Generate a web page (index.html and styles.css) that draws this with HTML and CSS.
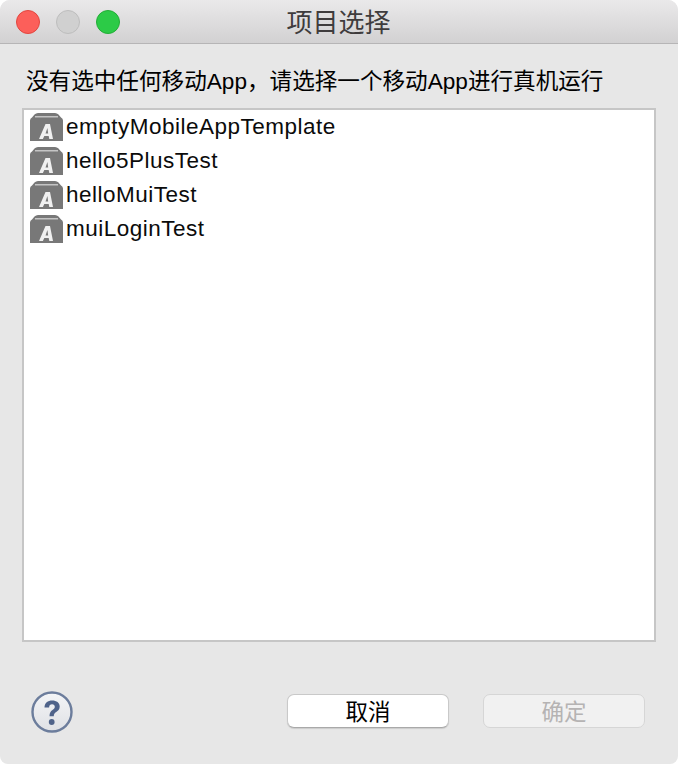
FILE: index.html
```html
<!DOCTYPE html>
<html lang="zh">
<head>
<meta charset="utf-8">
<title>项目选择</title>
<link rel="stylesheet" href="styles.css">
</head>
<body>
<div class="window">
  <header class="titlebar">
    <div class="lights">
      <span class="light red"></span>
      <span class="light gray"></span>
      <span class="light green"></span>
    </div>
    <div class="title">项目选择</div>
  </header>
  <main class="content">
    <p class="message">没有选中任何移动App，请选择一个移动App进行真机运行</p>
    <ul class="list">
      <li class="item"><svg class="appicon" viewBox="0 0 33 28"><use href="#app"/></svg><span>emptyMobileAppTemplate</span></li>
      <li class="item"><svg class="appicon" viewBox="0 0 33 28"><use href="#app"/></svg><span>hello5PlusTest</span></li>
      <li class="item"><svg class="appicon" viewBox="0 0 33 28"><use href="#app"/></svg><span>helloMuiTest</span></li>
      <li class="item"><svg class="appicon" viewBox="0 0 33 28"><use href="#app"/></svg><span>muiLoginTest</span></li>
    </ul>
  </main>
  <footer class="footer">
    <svg class="help" viewBox="0 0 44 44">
      <defs>
        <linearGradient id="helpfill" x1="0" y1="0" x2="0" y2="1">
          <stop offset="0" stop-color="#f4f5f7"/>
          <stop offset="1" stop-color="#dfe1e5"/>
        </linearGradient>
        <filter id="soft" x="-10%" y="-10%" width="120%" height="120%">
          <feGaussianBlur stdDeviation="0.450"/>
        </filter>
      </defs>
      <g filter="url(#soft)">
        <circle cx="22" cy="22" r="19.500" fill="url(#helpfill)" stroke="#6c7d9c" stroke-width="2.400"/>
        <path d="M14.500 17.500c0-4.500 3.300-7 7.700-7 4.300 0 7.500 2.300 7.500 6 0 3-1.700 4.300-3.500 5.600-1.600 1.100-2.400 1.900-2.400 4.100h-4.300c0-3.300 1-4.800 3-6.200 1.500-1 2.300-1.800 2.300-3.200 0-1.600-1.100-2.600-2.700-2.600-1.800 0-2.900 1.100-3 3.300z" fill="#4f638a"/>
        <circle cx="21.700" cy="32" r="2.900" fill="#4f638a"/>
      </g>
    </svg>
    <div class="buttons">
      <button class="btn" type="button">取消</button>
      <button class="btn disabled" type="button" disabled>确定</button>
    </div>
  </footer>
</div>
<svg class="sprites" width="0" height="0">
  <defs>
    <filter id="softa" x="-20%" y="-20%" width="140%" height="140%">
      <feGaussianBlur stdDeviation="0.500"/>
    </filter>
    <g id="app">
      <path d="M0 28V7.500Q0 5.500 2 4.500L4.500 1.500Q6 0 8 0H25Q27 0 28.500 1.500L31 4.500Q33 5.500 33 7.500V28z" fill="#787878"/>
      <path d="M5 3.800H28" fill="none" stroke="#c4c4c4" stroke-width="1.400"/>
      <path d="M9 26 15.500 11H20L23 26H19.300L18.700 23H14.300L12.900 26zM15.500 20.500H18.200L17.400 15z" fill="#f0f0f0" filter="url(#softa)"/>
    </g>
  </defs>
</svg>
</body>
</html>
```
FILE: styles.css
```css
* {
  box-sizing: border-box;
}

html, body {
  margin: 0;
  padding: 0;
  height: 100%;
  background: #fff;
}

body {
  font-family: "Liberation Sans", "Noto Sans CJK SC", sans-serif;
  color: #000;
}

.window {
  width: 678px;
  height: 764px;
  display: flex;
  flex-direction: column;
  background: #e7e7e7;
  border-radius: 10px 10px 8px 8px;
  overflow: hidden;
}

.titlebar {
  position: relative;
  flex: none;
  height: 44px;
  background: linear-gradient(#eae9ea, #d2d1d2);
  border-bottom: 1px solid #b6b5b6;
  display: flex;
  align-items: center;
  justify-content: center;
}

.lights {
  position: absolute;
  left: 16px;
  top: 10px;
  display: flex;
  gap: 16px;
}

.light {
  width: 24px;
  height: 24px;
  border-radius: 50%;
  border: 1px solid transparent;
}

.red {
  background: #fc5f5a;
  border-color: #e2463f;
}

.gray {
  background: #d0d0d0;
  border-color: #bdbdbd;
}

.green {
  background: #2ccb47;
  border-color: #23ad37;
}

.title {
  font-size: 26px;
  line-height: 30px;
  color: #3f3c3d;
  margin: 3px 0 0 -1px;
}

.content {
  flex: 1;
  display: flex;
  flex-direction: column;
  padding: 0 22px;
  min-height: 0;
}

.message {
  margin: 25px 0 0 4px;
  font-size: 22.600px;
  line-height: 26px;
  height: 39px;
  white-space: nowrap;
}

.list {
  list-style: none;
  margin: 0;
  padding: 0 6px;
  height: 534px;
  background: #fff;
  border: 2px solid #c6c6c6;
}

.item {
  height: 34px;
  display: flex;
  align-items: center;
  gap: 3px;
  font-size: 22.500px;
  letter-spacing: 0.500px;
  color: #0b0b0b;
  white-space: nowrap;
}

.appicon {
  flex: none;
  width: 33px;
  height: 28px;
  margin-bottom: 1px;
}

.footer {
  flex: none;
  height: 122px;
  display: flex;
  align-items: flex-start;
  justify-content: space-between;
  padding: 47px 33px 0 30px;
}

.help {
  width: 44px;
  height: 44px;
  margin-top: 1px;
}

.buttons {
  display: flex;
  gap: 34px;
  margin-top: 5px;
}

.btn {
  width: 162px;
  height: 34px;
  padding: 3px 0 0;
  font: inherit;
  font-size: 22.500px;
  line-height: 28px;
  color: #000;
  background: #fff;
  border: 1px solid #c9c9c9;
  border-bottom-color: #a9a9a9;
  border-radius: 7px;
  box-shadow: 0 1px 1px rgba(0, 0, 0, 0.12);
}

.btn.disabled {
  color: #b5b3b3;
  background: #f1f1f1;
  border-color: #d6d6d6;
  box-shadow: none;
}

.sprites {
  position: absolute;
}
```
